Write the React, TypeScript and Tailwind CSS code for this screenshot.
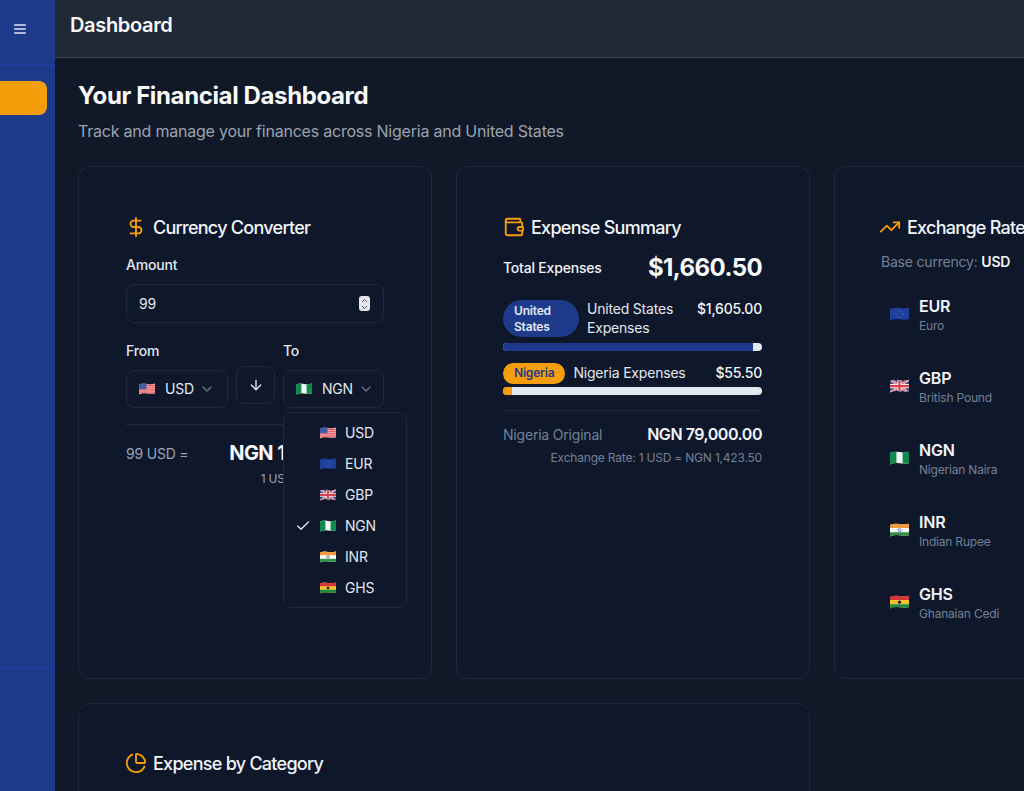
import { useId } from "react";
import { ArrowDown, Check, ChartPie, ChevronDown, DollarSign, TrendingUp, Wallet } from "lucide-react";

const font = { fontFamily: "Inter, 'Noto Sans', sans-serif" };

const FLAG_WAVE = "M0 1.6 Q4 0 8 .9 T16 .6 V10.4 Q12 11.2 8 10.4 T0 11.4 Z";

const Flag = ({ code, size = 16 }: { code: string; size?: number }) => {
  const id = useId();
  return (
    <svg width={size} height={(size * 12) / 16} viewBox="0 0 16 12" className="shrink-0">
      <clipPath id={id}>
        <path d={FLAG_WAVE} />
      </clipPath>
      <g clipPath={`url(#${id})`}>
        {code === "USD" && (
          <>
            <rect width="16" height="12" fill="#f4a6a8" />
            <path d="M0 2.5H16M0 4.7H16M0 6.9H16M0 9.1H16" stroke="#e4575f" strokeWidth="1" />
            <rect width="7.5" height="6.2" fill="#3b5fa8" />
          </>
        )}
        {code === "EUR" && (
          <>
            <rect width="16" height="12" fill="#1e3f9c" />
            <circle cx="8" cy="6" r="2.8" fill="none" stroke="#5a78b8" strokeWidth=".8" strokeDasharray="1 1" />
          </>
        )}
        {code === "GBP" && (
          <>
            <rect width="16" height="12" fill="#2f4a8f" />
            <path d="M0 0L16 12M16 0L0 12" stroke="#f3d6d8" strokeWidth="2.2" />
            <path d="M0 0L16 12M16 0L0 12" stroke="#d8404c" strokeWidth=".8" />
            <path d="M8 0V12M0 6H16" stroke="#f3e6e6" strokeWidth="3.4" />
            <path d="M8 0V12M0 6H16" stroke="#d8404c" strokeWidth="1.8" />
          </>
        )}
        {code === "NGN" && (
          <>
            <rect width="16" height="12" fill="#f5f5f5" />
            <rect width="5.4" height="12" fill="#0f8a4f" />
            <rect x="10.6" width="5.4" height="12" fill="#0f8a4f" />
          </>
        )}
        {code === "INR" && (
          <>
            <rect width="16" height="12" fill="#f5f5f5" />
            <rect width="16" height="4.2" fill="#f09a3e" />
            <rect y="7.8" width="16" height="4.2" fill="#2f9144" />
            <circle cx="8" cy="6" r="1.3" fill="none" stroke="#3a5aa0" strokeWidth=".6" />
          </>
        )}
        {code === "GHS" && (
          <>
            <rect width="16" height="12" fill="#f4c430" />
            <rect width="16" height="4.2" fill="#d8343c" />
            <rect y="7.8" width="16" height="4.2" fill="#1f8a4c" />
            <circle cx="8" cy="6" r="1.3" fill="#1a1a1a" />
          </>
        )}
      </g>
    </svg>
  );
};

const CardTitle = ({ icon, title }: { icon: React.ReactNode; title: string }) => (
  <div className="flex h-6 items-center gap-[6px]">
    {icon}
    <h3 className="text-[18px] font-medium text-[#f1f5f9] tracking-[-0.73px] whitespace-nowrap">{title}</h3>
  </div>
);

const currencies = ["USD", "EUR", "GBP", "NGN", "INR", "GHS"];

const rates = [
  { code: "EUR", name: "Euro" },
  { code: "GBP", name: "British Pound" },
  { code: "NGN", name: "Nigerian Naira" },
  { code: "INR", name: "Indian Rupee" },
  { code: "GHS", name: "Ghanaian Cedi" },
];

const cardClass = "rounded-xl border border-[#1e293b] bg-[#0f172a] pr-[47px] pt-[48px] pb-[48px]";

const SelectBox = ({ code }: { code: string }) => (
  <div className="flex h-[38px] items-center rounded-lg border border-[#1e293b] pl-[12px] pb-[1px] text-[14px] text-[#e2e8f0]">
    <Flag code={code} />
    <span className="ml-[10px]">{code}</span>
    <ChevronDown className="ml-[5px] h-4 w-4 text-[#64748b]" />
  </div>
);

const CurrencyConverter = () => (
  <div className={`${cardClass} pl-[47px]`}>
    <CardTitle icon={<DollarSign className="-ml-[1px] h-[22px] w-[22px] text-[#f59e0b]" />} title="Currency Converter" />
    <p className="mt-[16px] text-[14px] leading-5 font-medium text-[#e2e8f0]">Amount</p>
    <div className="mt-[9px] flex h-[39px] items-center justify-between rounded-lg border border-[#1e293b] pl-3 pr-[13px] text-[14px] text-[#e2e8f0]">
      <span>99</span>
      <span className="flex h-[15px] w-[11px] flex-col items-center justify-center rounded-[3px] bg-[#e5e7eb]">
        <svg width="7" height="12" viewBox="0 0 7 12" fill="none" stroke="#4b5563" strokeWidth="1">
          <path d="M1 4L3.5 1.5L6 4M1 8L3.5 10.5L6 8" />
        </svg>
      </span>
    </div>
    <div className="relative mt-[18px] flex items-end gap-2">
      <div className="w-[102px]">
        <p className="mb-[9px] text-[14px] leading-5 font-medium text-[#e2e8f0]">From</p>
        <SelectBox code="USD" />
      </div>
      <button className="mb-[4px] flex h-[38px] w-[39px] items-center justify-center rounded-lg border border-[#1e293b] text-[#e2e8f0]">
        <ArrowDown className="h-4 w-4" />
      </button>
      <div className="w-[101px]">
        <p className="mb-[9px] text-[14px] leading-5 font-medium text-[#e2e8f0]">To</p>
        <SelectBox code="NGN" />
      </div>
      <div className="absolute left-[157px] top-[71px] z-10 w-[124px] rounded-lg border border-[#1e293b] bg-[#0f172a] py-[4px]">
        {currencies.map((code) => (
          <div key={code} className="relative flex h-[31px] items-center pl-[36px] text-[14px] text-[#e2e8f0]">
            {code === "NGN" && <Check className="absolute left-[11px] h-4 w-4" />}
            <Flag code={code} />
            <span className="ml-[9px]">{code}</span>
          </div>
        ))}
      </div>
    </div>
    <div className="mt-[16px] border-t border-[#1e293b] pt-[14px]">
      <div className="flex items-center justify-between">
        <span className="text-[14px] text-[#94a3b8]">99 USD =</span>
        <span className="text-[20px] leading-7 font-bold text-[#f8fafc] tracking-[-0.55px]">NGN 140,926.50</span>
      </div>
      <p className="mt-[4px] text-right text-[12px] leading-4 text-[#94a3b8]">1 USD = NGN 1,423.50</p>
    </div>
  </div>
);

const ExpenseSummary = () => (
  <div className={`${cardClass} pl-[46px]`}>
    <CardTitle icon={<Wallet className="h-[22px] w-[22px] text-[#f59e0b]" />} title="Expense Summary" />
    <div className="mt-[13px] flex items-center justify-between">
      <span className="pb-[2px] text-[14px] font-medium text-[#f1f5f9]">Total Expenses</span>
      <span className="text-[24px] leading-8 font-bold text-[#f8fafc] tracking-[-0.6px]">$1,660.50</span>
    </div>
    <div className="mt-[16px] flex items-start justify-between">
      <div className="flex items-start gap-2">
        <span className="flex h-[37px] w-[76px] items-center rounded-full bg-[#1e3a8a] pl-[11px] text-[12px] leading-[16px] font-semibold text-[#e2e8f0]">
          United
          <br />
          States
        </span>
        <span className="-mt-[1px] w-[100px] text-[14px] leading-[19px] text-[#e2e8f0]">United States Expenses</span>
      </div>
      <span className="-mt-[1px] text-[14px] leading-[19px] font-medium text-[#f1f5f9]">$1,605.00</span>
    </div>
    <div className="mt-[6px] h-2 overflow-hidden rounded-full bg-[#e2e8f0]">
      <div className="h-full w-[96.7%] bg-[#1e3a8a]" />
    </div>
    <div className="mt-[11px] flex items-center justify-between">
      <div className="flex items-center gap-2">
        <span className="flex h-[21px] items-center rounded-full bg-[#f59e0b] px-[11px] text-[12px] font-semibold text-[#1e3a8a]">
          Nigeria
        </span>
        <span className="pb-[1px] text-[14px] text-[#e2e8f0]">Nigeria Expenses</span>
      </div>
      <span className="pb-[1px] text-[14px] font-medium text-[#f1f5f9]">$55.50</span>
    </div>
    <div className="mt-[3px] h-2 overflow-hidden rounded-full bg-[#e2e8f0]">
      <div className="h-full w-[3.4%] bg-[#f59e0b]" />
    </div>
    <div className="mt-[15px] border-t border-[#1e293b] pt-[11px]">
      <div className="flex items-center justify-between">
        <span className="text-[14px] text-[#738197]">Nigeria Original</span>
        <span className="text-[16px] leading-6 font-semibold text-[#f1f5f9] tracking-[-0.46px]">NGN 79,000.00</span>
      </div>
      <p className="mt-[4px] text-right text-[12px] leading-4 text-[#738197]">Exchange Rate: 1 USD = NGN 1,423.50</p>
    </div>
  </div>
);

const ExchangeRates = () => (
  <div className={`${cardClass} pl-[46px]`}>
    <CardTitle icon={<TrendingUp className="-ml-[2px] h-[22px] w-[22px] text-[#f59e0b]" />} title="Exchange Rates" />
    <p className="mt-[13px] text-[14px] leading-5 text-[#738197] whitespace-nowrap">
      Base currency: <span className="font-semibold text-[#f1f5f9]">USD</span>
    </p>
    <div className="mt-[14px] flex flex-col gap-4 pl-[9px]">
      {rates.map((rate) => (
        <div key={rate.code} className="flex h-[56px] items-center gap-[10px]">
          <Flag code={rate.code} size={19} />
          <div>
            <p className="text-[16px] leading-[23px] font-semibold text-[#f1f5f9]">{rate.code}</p>
            <p className="text-[12px] leading-4 text-[#738197] whitespace-nowrap">{rate.name}</p>
          </div>
        </div>
      ))}
    </div>
  </div>
);

export default function App() {
  return (
    <div className="flex h-screen w-screen overflow-hidden bg-[#111827] tracking-[-0.2px]" style={font}>
      <aside className="w-[55px] shrink-0 bg-[#1e3a8a]">
        <div className="h-[65px] border-b border-[#1e40af] pl-[14px] pt-[24px]">
          <svg width="12" height="10" viewBox="0 0 12 10" fill="none" stroke="#e2e8f0" strokeWidth="1.4" strokeLinecap="round">
            <path d="M.7 1H11.3M.7 5H11.3M.7 9H11.3" />
          </svg>
        </div>
        <div className="h-[604px] border-b border-[#1e40af] pt-[16px] pr-2">
          <div className="h-[34px] rounded-r-lg bg-[#f59e0b]" />
        </div>
      </aside>
      <div className="min-w-0 flex-1">
        <header className="flex h-[58px] items-start border-b border-[#374151] bg-[#1f2937] pl-[15px] pt-[11px]">
          <h1 className="text-[20px] leading-7 font-semibold text-[#f8fafc] tracking-[-0.33px]">Dashboard</h1>
        </header>
        <main className="pl-[23px] pt-[22px]">
          <h2 className="text-[24px] leading-8 font-bold text-[#f8fafc] tracking-[-0.375px]">Your Financial Dashboard</h2>
          <p className="mt-[7px] text-[16px] leading-6 text-[#9ca3af] tracking-[-0.22px]">
            Track and manage your finances across Nigeria and United States
          </p>
          <div className="mt-[23px] grid w-[1110px] grid-cols-[354px_354px_354px] gap-6">
            <CurrencyConverter />
            <ExpenseSummary />
            <ExchangeRates />
            <div className={`${cardClass} col-span-2 h-[300px] pl-[47px] !pt-[47px]`}>
              <CardTitle icon={<ChartPie className="-ml-[1px] h-[22px] w-[22px] text-[#f59e0b]" />} title="Expense by Category" />
            </div>
          </div>
        </main>
      </div>
    </div>
  );
}
